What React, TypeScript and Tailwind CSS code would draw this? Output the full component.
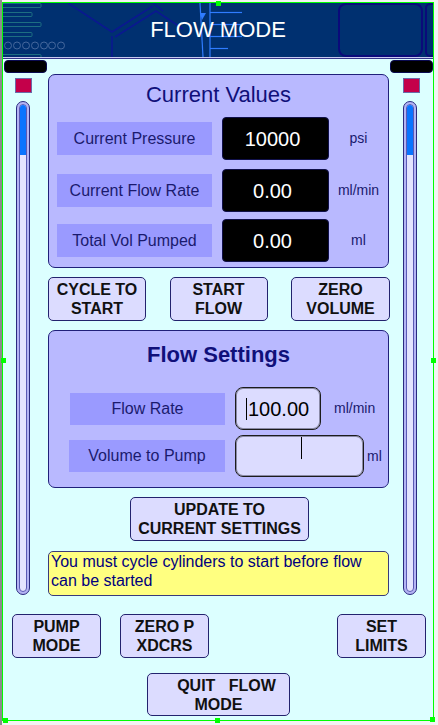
import React from "react";

const font = { fontFamily: '"Liberation Sans", Arial, sans-serif' };

function Btn({ className = "", children }: { className?: string; children: React.ReactNode }) {
  return (
    <div
      className={
        "flex flex-col items-center justify-center rounded-[5px] border border-[#23236e] bg-[#dcdcff] text-[16px] font-bold leading-[19px] text-[#111111] " +
        className
      }
    >
      {children}
    </div>
  );
}

function Slider() {
  return (
    <div className="w-[14px] h-[494px] rounded-full border border-[#2a2a80] bg-[#b4b4f4] p-[2px]">
      <div className="h-full w-full overflow-hidden rounded-full border border-[#5a5ab4] bg-[#e4e4ff]">
        <div className="h-[50px] w-full bg-[#0a74ff]" />
      </div>
    </div>
  );
}

function SideCol({ right = false }: { right?: boolean }) {
  return (
    <div className={"flex flex-col " + (right ? "w-[43px] items-start" : "w-[45px] items-start")}>
      <div
        className={
          "mt-[1px] h-[13px] rounded-[4px] border border-[#0a0a50] bg-black " +
          (right ? "ml-[1px] w-[43px]" : "ml-[1px] w-[43px]")
        }
      />
      <div
        className={
          "mt-[5px] h-[15px] w-[17px] border border-[#6a6aa8] bg-[#c4004a] " +
          (right ? "ml-[14px]" : "ml-[12px]")
        }
      />
      <div className={"mt-[8px] " + (right ? "ml-[14px]" : "ml-[13px]")}>
        <Slider />
      </div>
    </div>
  );
}

function HeaderArt() {
  return (
    <svg className="absolute inset-0" width="430" height="54" viewBox="0 0 430 54">
      <g fill="none" stroke="#1d6f82" strokeWidth="1">
        <rect x="-3" y="0.5" width="41" height="4" rx="1" />
        <rect x="-3" y="9.5" width="32" height="4" rx="1" />
        <rect x="-3" y="19.5" width="41" height="4" rx="1" />
        <rect x="-3" y="29.5" width="32" height="4" rx="1" />
        <rect x="-3" y="51.5" width="41" height="4" rx="1" />
      </g>
      <g fill="none" stroke="#44679c" strokeWidth="1">
        {[5, 14, 23, 32, 41, 49, 58].map((cx) => (
          <circle key={cx} cx={cx} cy={42.5} r={3.5} />
        ))}
      </g>
      <g fill="none" stroke="#0a1890" strokeWidth="1.6">
        <path d="M65 0 L109 29 L150 3" />
        <path d="M112 34 L153 8 L180 26" />
        <path d="M109 33 L109 54" />
        <path d="M150 0 L160 8" />
      </g>
      <g fill="none" stroke="#2f7cff" strokeWidth="1.2">
        <path d="M197 0 L200 54" />
        <path d="M207 0 L207 54" />
        <path d="M207 9.5 L239 9.5" />
        <path d="M207 21.5 L239 21.5" />
        <path d="M207 33.5 L239 33.5" />
        <path d="M207 45.5 L225 45.5" />
      </g>
      <path d="M197 10 L203 10 L199 17 Z" fill="#2f7cff" />
      <g fill="none" stroke="#0a0a7a" strokeWidth="2">
        <rect x="336" y="1" width="83" height="52" rx="7" />
        <rect x="423" y="1" width="12" height="52" rx="4" />
      </g>
    </svg>
  );
}

export default function App() {
  return (
    <div className="relative h-[725px] w-[438px] overflow-hidden bg-[#f2f2f2]" style={font}>
      <div className="absolute left-0 top-0 h-[725px] w-[2px] bg-[#8c8c8c]" />
      <div className="ml-[2px] mt-[2px] h-[719px] w-[432px] border border-[#00ff00] bg-[#dcffff]">
        {/* header */}
        <div className="relative flex h-[54px] items-center justify-center overflow-hidden bg-[#003070]">
          <HeaderArt />
          <div className="relative text-[22px] leading-none text-white">FLOW MODE</div>
        </div>
        <div className="h-[1px] bg-[#c8c8f0]" />
        <div className="h-[1px] bg-[#34348a]" />

        {/* main row */}
        <div className="flex h-[537px]">
          <SideCol />
          <div className="flex w-[341px] flex-col">
            {/* Current values panel */}
            <div className="mt-[15px] h-[194px] rounded-[7px] border border-[#20207a] bg-[#b9b9ff]">
              <div className="pt-[7px] text-center text-[22px] leading-[26px] text-[#10107a]">Current Values</div>
              {[
                { label: "Current Pressure", value: "10000", unit: "psi", mt: "mt-[9px]" },
                { label: "Current Flow Rate", value: "0.00", unit: "ml/min", mt: "mt-[9px]" },
                { label: "Total Vol Pumped", value: "0.00", unit: "ml", mt: "mt-[7px]" },
              ].map((r) => (
                <div key={r.label} className={"flex h-[43px] items-center " + r.mt}>
                  <div className="ml-[8px] flex h-[33px] w-[155px] items-center justify-center bg-[#9a9aff] text-[16px] text-[#1a1a6e]">
                    {r.label}
                  </div>
                  <div className="ml-[10px] flex h-[43px] w-[107px] items-center justify-center rounded-[4px] border border-[#10104a] bg-black pr-[6px] text-[20px] text-white">
                    {r.value}
                  </div>
                  <div className="flex-1 text-center text-[14px] text-[#1a1a6e]">{r.unit}</div>
                </div>
              ))}
            </div>

            {/* buttons */}
            <div className="mt-[9px] flex h-[44px] justify-between">
              <Btn className="w-[98px]">
                <span>CYCLE TO</span>
                <span>START</span>
              </Btn>
              <Btn className="w-[98px]">
                <span>START</span>
                <span>FLOW</span>
              </Btn>
              <Btn className="w-[99px] -mr-[1px]">
                <span>ZERO</span>
                <span>VOLUME</span>
              </Btn>
            </div>

            {/* Flow settings panel */}
            <div className="mt-[9px] h-[158px] rounded-[7px] border border-[#20207a] bg-[#b9b9ff]">
              <div className="pt-[11px] text-center text-[22px] font-bold leading-[26px] text-[#10107a]">Flow Settings</div>
              <div className="mt-[19px] flex h-[43px] items-center">
                <div className="ml-[21px] flex h-[32px] w-[155px] items-center justify-center bg-[#9a9aff] text-[16px] text-[#1a1a6e]">
                  Flow Rate
                </div>
                <div className="ml-[10px] flex h-[43px] w-[86px] items-center rounded-[8px] border border-[#1c1c1c] bg-[#dcdcff] pl-[10px] text-[20px] text-black shadow-[inset_0_0_0_1px_#8a8aa6]">
                  <span className="mr-[1px] inline-block h-[22px] w-[1px] bg-black" />
                  100.00
                </div>
                <div className="ml-[13px] text-[14px] text-[#1a1a6e]">ml/min</div>
              </div>
              <div className="mt-[5px] flex h-[42px] items-center">
                <div className="ml-[20px] flex h-[32px] w-[156px] items-center justify-center bg-[#9a9aff] text-[16px] text-[#1a1a6e]">
                  Volume to Pump
                </div>
                <div className="relative ml-[10px] h-[42px] w-[129px] rounded-[8px] border border-[#1c1c1c] bg-[#dcdcff] shadow-[inset_0_0_0_1px_#8a8aa6]">
                  <span className="absolute left-[65px] top-[1px] h-[22px] w-[1px] bg-black" />
                </div>
                <div className="ml-[3px] text-[14px] text-[#1a1a6e]">ml</div>
              </div>
            </div>

            <Btn className="ml-[82px] mt-[9px] h-[44px] w-[179px]">
              <span>UPDATE TO</span>
              <span>CURRENT SETTINGS</span>
            </Btn>

            <div className="mt-[10px] h-[45px] rounded-[5px] border border-[#3a3a7a] bg-[#ffff80] pl-[2px] text-[16px] leading-[19px] text-[#00007e]">
              You must cycle cylinders to start before flow can be started
            </div>
          </div>
          <SideCol right />
        </div>

        {/* bottom buttons */}
        <div className="mt-[18px] flex h-[44px]">
          <Btn className="ml-[9px] w-[89px]">
            <span>PUMP</span>
            <span>MODE</span>
          </Btn>
          <Btn className="ml-[19px] w-[89px]">
            <span>ZERO P</span>
            <span>XDCRS</span>
          </Btn>
          <Btn className="ml-auto mr-[7px] w-[89px]">
            <span>SET</span>
            <span>LIMITS</span>
          </Btn>
        </div>
        <Btn className="ml-[144px] mt-[15px] h-[43px] w-[143px]">
          <span className="whitespace-pre pl-[16px]">QUIT   FLOW</span>
          <span>MODE</span>
        </Btn>
      </div>
      {/* selection handles */}
      <div className="absolute left-[216px] top-[1px] h-[5px] w-[5px] bg-[#00ff00]" />
      <div className="absolute left-[1px] top-[358px] h-[5px] w-[5px] bg-[#00ff00]" />
      <div className="absolute left-[431px] top-[358px] h-[5px] w-[5px] bg-[#00ff00]" />
      <div className="absolute left-[3px] top-[718px] h-[5px] w-[5px] bg-[#00ff00]" />
      <div className="absolute left-[215px] top-[718px] h-[5px] w-[5px] bg-[#00ff00]" />
      <div className="absolute left-[430px] top-[717px] h-[5px] w-[5px] bg-[#00ff00]" />
    </div>
  );
}
